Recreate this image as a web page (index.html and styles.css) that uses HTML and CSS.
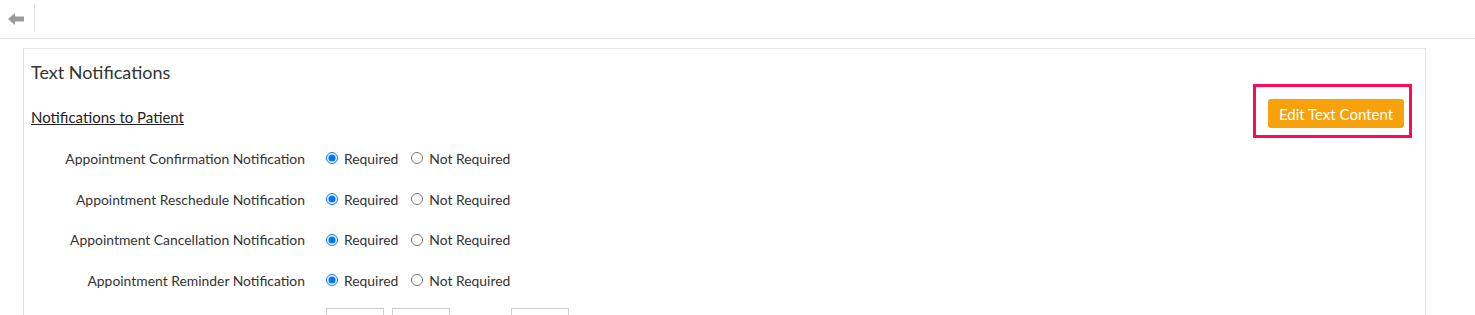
FILE: index.html
```html
<!DOCTYPE html>
<html>
<head>
<meta charset="utf-8">
<link rel="stylesheet" href="styles.css">
</head>
<body>
<div class="topbar">
  <span class="back">
    <svg width="16" height="12" viewBox="0 0 16 12"><path d="M0 6 L7 0 L7 3.5 L16 3.5 L16 8.5 L7 8.5 L7 12 Z" fill="#9a9a9a"/></svg>
  </span>
  <span class="sep"></span>
</div>
<div class="panel">
  <div class="head">
    <div class="head-left">
      <h2 class="title">Text Notifications</h2>
      <div class="subhead">Notifications to Patient</div>
    </div>
    <div class="highlight">
      <button class="btn">Edit Text Content</button>
    </div>
  </div>
  <div class="rows">
    <div class="row">
      <span class="label">Appointment Confirmation Notification</span>
      <label class="opt"><input type="radio" name="r1" checked> Required</label>
      <label class="opt"><input type="radio" name="r1"> Not Required</label>
    </div>
    <div class="row">
      <span class="label">Appointment Reschedule Notification</span>
      <label class="opt"><input type="radio" name="r2" checked> Required</label>
      <label class="opt"><input type="radio" name="r2"> Not Required</label>
    </div>
    <div class="row">
      <span class="label">Appointment Cancellation Notification</span>
      <label class="opt"><input type="radio" name="r3" checked> Required</label>
      <label class="opt"><input type="radio" name="r3"> Not Required</label>
    </div>
    <div class="row">
      <span class="label">Appointment Reminder Notification</span>
      <label class="opt"><input type="radio" name="r4" checked> Required</label>
      <label class="opt"><input type="radio" name="r4"> Not Required</label>
    </div>
    <div class="row inputs">
      <span class="label"></span>
      <span class="box b1"></span>
      <span class="box b2"></span>
      <span class="box b3"></span>
    </div>
  </div>
</div>
</body>
</html>
```
FILE: styles.css
```css
body {
  margin: 0;
  font-family: Lato, "Open Sans", sans-serif;
  color: #333;
  background: #fff;
  overflow: hidden;
}
.topbar {
  height: 38px;
  border-bottom: 1px solid #e6e6e6;
  display: flex;
  align-items: center;
}
.back {
  display: flex;
  margin-left: 8px;
}
.sep {
  width: 1px;
  height: 28px;
  background: #e3e3e3;
  margin-left: 10px;
  margin-top: -2px;
}
.panel {
  margin: 9px 0 0 23px;
  width: 1403px;
  height: 400px;
  border: 1px solid #e3e3e3;
  padding: 13px 13px 0 7px;
  box-sizing: border-box;
}
.head {
  display: flex;
  justify-content: space-between;
  align-items: flex-start;
}
.title {
  margin: -2px 0 0 0;
  font-size: 18px;
  font-weight: 400;
  line-height: 24px;
  color: #333;
}
.subhead {
  margin-top: 24px;
  font-size: 15px;
  line-height: 18px;
  text-decoration: underline;
  color: #222;
}
.highlight {
  margin-top: 22px;
  border: 3px solid #ff0a55;
  padding: 12px 5px 7px 12px;
}
.btn {
  display: block;
  width: 136px;
  height: 29px;
  background: #f7a10b;
  border: none;
  border-radius: 3px;
  color: #fff;
  font-family: Lato, sans-serif;
  font-size: 15px;
  padding: 0;
}
.row {
  display: flex;
  align-items: center;
  height: 40.7px;
  font-size: 13.9px;
}
.label {
  width: 274px;
  text-align: right;
  flex: none;
}
.opt {
  display: flex;
  align-items: center;
  margin-left: 21px;
}
.opt + .opt {
  margin-left: 13px;
}
.opt input {
  margin: 0 6px 0 0;
  width: 12px;
  height: 12px;
}
.inputs {
  align-items: flex-start;
  padding-top: 7px;
}
.box {
  width: 56px;
  height: 30px;
  border: 1px solid #cfcfcf;
  flex: none;
}
.b1 { margin-left: 21px; }
.b2 { margin-left: 8px; }
.b3 { margin-left: 61px; }
```
